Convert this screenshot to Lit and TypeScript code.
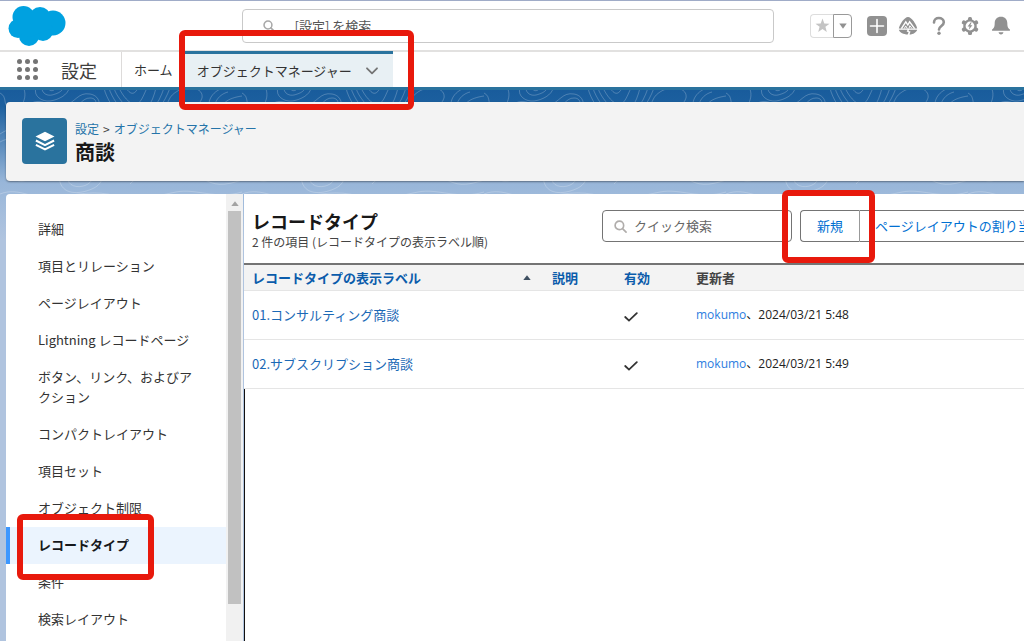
import { LitElement, html, css, svg } from "lit";
import { customElement, property } from "lit/decorators.js";
import { classMap } from "lit/directives/class-map.js";

const contour = encodeURIComponent(
  `<svg xmlns="http://www.w3.org/2000/svg" width="242" height="110" fill="none" stroke="#fff" stroke-opacity=".22">
  <path d="M0 3c8 4 2 12 10 16s18-8 14-20M36-2c-3 8 6 14 14 13s18-6 19-13M42-2c0 6 6 8 10 7s10-3 11-7M48-2c1 3 5 4 8 0"/>
  <path d="M30 14c12-8 22 6 34 2s14-14 26-12 12 16 2 22-30 4-42 12M72 20c8-4 10-12 18-12s8 9 0 14-18 3-26 8"/>
  <path d="M104-2c2 10 12 26 20 30M109-2c2 8 12 24 20 26M114-2c2 8 12 20 18 22M119-2c4 8 10 16 16 16s8-8 12-16M126-2c4 6 8 8 12 0M132 28c14-4 20-14 24-30M138 28c12-4 20-12 26-30M146 28c10-4 18-14 24-30"/>
  <path d="M176 2c12-8 28-4 26 6s-18 8-26 14-14 2-10-6 4-10 10-14zM210 20c-4-10 4-20 14-22M216 22c-4-10 4-18 12-20M224 24c-6-10 4-16 18-18"/>
  <path d="M0 44c20-14 30 4 48 0s20-16 38-12 22 22 40 16 24-22 44-18 20 24 40 20 18-14 32-6M0 52c18-10 30 4 46 2s24-16 40-12 20 20 40 16 24-20 42-16 22 22 40 20 20-10 34-10"/>
  <path d="M10 76c4-12 24-10 26 0s-10 18-20 14-8-8-6-14zM16 77c3-7 14-6 15 0s-6 10-11 8-5-4-4-8zM60 92c-4-16 14-24 30-20s16 20 4 26-30 8-34-6zM68 90c-2-8 8-14 18-12s8 12 2 16-18 4-20-4zM130 84c14-16 28-2 42-8s20-8 30 2 22 6 40 0M130 94c12-14 28-4 42-8s18-6 30 2 22 8 40 2M0 104c20-8 36 8 56 4s40-8 60-2 40 0 60-4 40 8 66 0"/>
  </svg>`
);

const icons = {
  search: svg`<svg viewBox="0 0 14 14" fill="none" stroke="currentColor" stroke-width="1.8"><circle cx="5.8" cy="5.8" r="4.6"/><path d="M9.2 9.2 13 13" stroke-linecap="round"/></svg>`,
  plus: svg`<svg viewBox="0 0 20 20"><rect width="20" height="20" rx="4" fill="currentColor"/><path d="M10 3.5v13M3.5 10h13" stroke="#fff" stroke-width="1.6" stroke-linecap="round"/></svg>`,
  trail: svg`<svg viewBox="0 0 20 20"><path d="M.8 12.500C1.800 8 6.500 1 10 1s8.200 7 9.200 11.500z" fill="currentColor"/><path d="m3.400 12.600 4.400-6.800 2 3.200 1.800-3.200 5 6.800" fill="none" stroke="#fff" stroke-width="1.400"/><path d="m6.300 12.500 1.400-2.600 1.600 2.600M11 12.500l.8-2.800 2.200 2.800" fill="none" stroke="#fff" stroke-width="1"/><path d="M.8 13.800h8.800L8.600 15.400l2 .8-.9 2.400C5.500 18.400 1.800 16.600.800 13.800zM11.200 13.800h8c-.8 2.600-3.800 4.600-7.700 4.800l1-3-2-.6z" fill="currentColor"/></svg>`,
  help: svg`<svg viewBox="0 0 20 20"><path d="M5 6.500C5 3.500 7.200 2 9.800 2c2.800 0 5 1.700 5 4.300 0 3.700-4.600 3.700-4.800 7.200" fill="none" stroke="currentColor" stroke-width="2.600" stroke-linecap="round"/><circle cx="10" cy="17.300" r="1.700" fill="currentColor"/></svg>`,
  gear: svg`<svg viewBox="0 0 20 20"><g fill="currentColor"><circle cx="10" cy="10" r="6.800"/>${[0, 60, 120].map(
    (a) => svg`<rect x="8" y="1" width="4" height="18" rx="1.500" transform="rotate(${a} 10 10)"/>`
  )}</g><circle cx="10" cy="10" r="4.400" fill="#fff"/><path d="M10.800 6.200 7.600 10.600h2l-.8 3.200 3.600-4.500h-2.100l1.400-3.100z" fill="currentColor"/></svg>`,
  bell: svg`<svg viewBox="0 0 20 20" fill="currentColor"><path d="M10 .8c-3.900 0-6.300 2.700-6.300 6.200 0 4.600-1.200 5.200-2.300 6.300-.9.900-.4 1.500.4 1.500h16.400c.8 0 1.300-.6.400-1.500-1.100-1.100-2.300-1.700-2.300-6.300C16.300 3.500 13.900.8 10 .8zM7.600 16.200h4.800c0 1.200-1 2.200-2.400 2.200s-2.400-1-2.400-2.200z"/></svg>`,
  star: svg`<svg viewBox="0 0 16 16" fill="currentColor"><path d="m8 .6 1.900 5.200 5.600.2-4.400 3.400 1.500 5.500L8 11.800l-4.600 3.100 1.500-5.500L.5 6l5.600-.2z"/></svg>`,
  caret: svg`<svg viewBox="0 0 8 6" fill="currentColor"><path d="M.3.500h7.400L4 5.700z"/></svg>`,
  up: svg`<svg viewBox="0 0 8 5" fill="currentColor"><path d="M.300 5h7.400L4 .300z"/></svg>`,
  chevron: svg`<svg viewBox="0 0 12 8" fill="none" stroke="currentColor" stroke-width="1.800" stroke-linecap="round" stroke-linejoin="round"><path d="m1 1.300 5 5 5-5"/></svg>`,
  check: svg`<svg viewBox="0 0 14 10" fill="none" stroke="currentColor" stroke-width="1.800" stroke-linecap="round"><path d="M1.200 5 5 8.600 12.800 1.200"/></svg>`,
  layers: svg`<svg viewBox="0 0 20 20"><path d="M10 .800 19.500 5.500 10 10.200.500 5.500z" fill="#fff"/><path d="m.900 9.500 9.100 4.600 9.100-4.600M.900 13.800l9.100 4.600 9.100-4.600" fill="none" stroke="#fff" stroke-width="2"/></svg>`,
  cloud: svg`<svg viewBox="0 0 58 42" fill="#00a1e0"><circle cx="15.500" cy="12" r="11"/><circle cx="32" cy="12.500" r="10.500"/><circle cx="45" cy="18" r="12.500"/><circle cx="10" cy="23.500" r="9.500"/><circle cx="21" cy="31" r="10"/><circle cx="35" cy="26" r="10"/><path d="M12 10h30v14l-20 8-12-4z"/></svg>`,
};

@customElement("setup-header")
class SetupHeader extends LitElement {
  static styles = css`
    :host { display: block; background: #fff; color: #3e3e3c; }
    .top {
      display: grid; grid-template-columns: 1fr minmax(0, 532px) 1fr; align-items: center;
      height: 52px; box-sizing: border-box; padding: 0 13px 0 4px;
      border-top: 1px solid #a0acc8; border-bottom: 2px solid #e2e1e0;
    }
    .logo { display: block; width: 58px; height: 42px; margin-left: 4px; }
    .search {
      display: flex; align-items: center; gap: 20px; height: 32px; padding: 0 20px;
      border: 1px solid #c9c9c9; border-radius: 4px; color: #a8a8a8;
    }
    .search svg { width: 12px; height: 12px; }
    input { flex: 1; min-width: 0; border: 0; outline: 0; padding: 0; background: none; font: inherit; color: #444; }
    input::placeholder { color: #555; opacity: 1; }
    .tools { display: flex; justify-content: flex-end; align-items: center; gap: 11px; color: #919191; }
    button { display: grid; place-items: center; padding: 0; border: 0; background: none; color: inherit; font: inherit; }
    .tool, .tool svg { width: 20px; height: 20px; }
    .fav { display: flex; margin-right: 4px; }
    .fav button { height: 24px; box-sizing: border-box; border: 1px solid #999; }
    .fav .star { width: 23px; border-color: #ddd; border-right: 0; border-radius: 4px 0 0 4px; color: #c4c4c4; }
    .fav .more { width: 19px; border-radius: 0 4px 4px 0; }
    .star svg { width: 15px; height: 15px; }
    .more svg { width: 8px; height: 6px; }
    .nav { display: flex; align-items: stretch; height: 35px; border-bottom: 3px solid #2a739e; }
    .waffle { display: grid; grid-template-columns: repeat(3, 5px); gap: 3px; align-content: center; margin-left: 17px; }
    .waffle i { width: 5px; height: 5px; border-radius: 3px; background: #747474; }
    .app { display: flex; align-items: center; font-size: 18px; padding: 0 24px 0 23px; border-right: 1px solid #dddbda; }
    a { display: flex; align-items: center; padding: 0 12px; color: #333; text-decoration: none; }
    .current { margin-top: -1px; padding-right: 15px; gap: 14px; background: #e8f0f4; border-top: 3px solid #2a739e; }
    .current svg { width: 12px; height: 8px; color: #747474; }
  `;
  render() {
    return html`
      <div class="top">
        <span class="logo">${icons.cloud}</span>
        <label class="search">${icons.search}<input type="search" aria-label="検索" placeholder="[設定] を検索" /></label>
        <div class="tools">
          <div class="fav">
            <button class="star" aria-label="お気に入り">${icons.star}</button>
            <button class="more" aria-label="お気に入りリスト">${icons.caret}</button>
          </div>
          <button class="tool" aria-label="追加">${icons.plus}</button>
          <button class="tool" aria-label="ガイド">${icons.trail}</button>
          <button class="tool" aria-label="ヘルプ">${icons.help}</button>
          <button class="tool" aria-label="設定">${icons.gear}</button>
          <button class="tool" aria-label="通知">${icons.bell}</button>
        </div>
      </div>
      <nav class="nav">
        <button class="waffle" aria-label="アプリケーションランチャー">${Array.from({ length: 9 }, () => html`<i></i>`)}</button>
        <span class="app">設定</span>
        <a href="#home">ホーム</a>
        <a class="current" href="#objects">オブジェクトマネージャー ${icons.chevron}</a>
      </nav>
    `;
  }
}

@customElement("object-sidebar")
class ObjectSidebar extends LitElement {
  @property({ type: Array }) items: string[] = [];
  @property() selected = "";
  static styles = css`
    :host { display: flex; background: #fff; border-radius: 4px 0 0 0; overflow: hidden; }
    .list { flex: 1; min-width: 0; margin: 0; padding: 17px 0 0; list-style: none; }
    a { display: block; padding: 8px 28px 9px; line-height: 20px; border-left: 4px solid transparent; color: #333; text-decoration: none; }
    .on { background: #ebf4fe; border-left-color: #3c97ff; color: #16181c; font-weight: 700; }
    .track { display: flex; flex-direction: column; align-items: center; width: 17px; background: #f1f1f1; color: #a3a3a3; }
    .track svg { width: 8px; height: 5px; padding: 7px 0 5px; }
    .thumb { width: 13px; height: 88%; background: #c1c1c1; }
  `;
  render() {
    return html`
      <ul class="list">
        ${this.items.map((t) => html`<li><a href="#" class=${classMap({ on: t === this.selected })}>${t}</a></li>`)}
      </ul>
      <div class="track">${icons.up}<div class="thumb"></div></div>
    `;
  }
}

@customElement("record-types")
class RecordTypes extends LitElement {
  rows = [
    { name: "01.コンサルティング商談", by: "mokumo", at: "2024/03/21 5:48" },
    { name: "02.サブスクリプション商談", by: "mokumo", at: "2024/03/21 5:49" },
  ];
  static styles = css`
    :host { display: flex; flex-direction: column; min-width: 0; overflow: hidden; background: #fff; }
    .bar { display: flex; align-items: flex-start; height: 53px; padding: 16px 0 0 8px; border-bottom: 2px solid #747474; }
    .title { flex: 0 0 350px; }
    h2 { margin: 0; font-size: 18px; line-height: 22px; color: #181818; }
    p { margin: 0; font-size: 12px; line-height: 20px; color: #444; }
    .quick {
      flex: none; display: flex; align-items: center; gap: 7px; box-sizing: border-box; width: 190px; height: 32px;
      padding: 0 11px; margin-right: 8px; border: 1px solid #747474; border-radius: 4px; color: #b0adab;
    }
    .quick svg { flex: none; width: 13px; height: 13px; }
    input { flex: 1; min-width: 0; border: 0; outline: 0; padding: 0; background: none; font: inherit; color: #444; }
    input::placeholder { color: #666; opacity: 1; }
    .group { flex: none; display: flex; }
    button {
      height: 32px; padding: 0 16px; border: 1px solid #747474; background: #fff; color: #0070d2;
      font: inherit; white-space: nowrap;
    }
    button:first-child { border-radius: 4px 0 0 4px; border-right-color: #999; }
    button:last-child { border-left: 0; padding-left: 15px; border-radius: 0 4px 4px 0; }
    table { width: 100%; table-layout: fixed; border-collapse: separate; border-spacing: 0; }
    .c1 { width: 300px; }
    .c2 { width: 72px; }
    th, td { box-sizing: border-box; text-align: left; padding: 0 8px; border-bottom: 1px solid #e5e5e5; white-space: nowrap; }
    th { height: 26px; line-height: 24px; background: #f3f3f3; color: #444; }
    th a { color: #0b5cab; }
    td { height: 49px; color: #222; }
    a { color: #1b69b6; text-decoration: none; }
    .stamp { font-family: "Open Sans", "Noto Sans CJK JP", sans-serif; font-size: 12px; }
    .by { color: #2b7de0; }
    .sort { display: flex; align-items: center; justify-content: space-between; padding-right: 5px; }
    .sort svg { width: 8px; height: 5px; color: #3e4f60; }
    td svg { display: block; width: 14px; height: 10px; color: #333; padding-top: 3px; }
    .rest { flex: 1; border-left: 1px solid #111; }
  `;
  render() {
    return html`
      <div class="bar">
        <div class="title">
          <h2>レコードタイプ</h2>
          <p>2 件の項目 (レコードタイプの表示ラベル順)</p>
        </div>
        <label class="quick">${icons.search}<input type="search" aria-label="クイック検索" placeholder="クイック検索" /></label>
        <div class="group"><button>新規</button><button>ページレイアウトの割り当て</button></div>
      </div>
      <table>
        <colgroup><col class="c1" /><col class="c2" /><col class="c2" /><col /></colgroup>
        <thead>
          <tr>
            <th><span class="sort"><a href="#">レコードタイプの表示ラベル</a>${icons.up}</span></th>
            <th><a href="#">説明</a></th>
            <th><a href="#">有効</a></th>
            <th>更新者</th>
          </tr>
        </thead>
        <tbody>
          ${this.rows.map(
            (r) => html`<tr>
              <td><a href="#">${r.name}</a></td>
              <td></td>
              <td>${icons.check}</td>
              <td class="stamp"><a class="by" href="#">${r.by}</a>、${r.at}</td>
            </tr>`
          )}
        </tbody>
      </table>
      <div class="rest"></div>
    `;
  }
}

@customElement("app-root")
class AppRoot extends LitElement {
  items = [
    "詳細", "項目とリレーション", "ページレイアウト", "Lightning レコードページ", "ボタン、リンク、およびアクション",
    "コンパクトレイアウト", "項目セット", "オブジェクト制限", "レコードタイプ", "条件", "検索レイアウト",
  ];
  static styles = css`
    :host {
      display: flex; flex-direction: column; position: relative; height: 100vh; overflow: hidden;
      font-family: "Noto Sans CJK JP", "Noto Sans", sans-serif; font-size: 13px; line-height: 20px;
    }
    .page {
      flex: 1; min-height: 0; display: flex; flex-direction: column; gap: 13px; padding: 12px 0 0 6px;
      background:
        url("data:image/svg+xml,${css([contour] as any)}") 0 0 / 242px 110px repeat-x,
        linear-gradient(#195c9c 0, #1c609f 16px, #98b6d9 92px, #b0c4df 150px, #b0c4df);
    }
    .head {
      display: flex; align-items: flex-start; gap: 8px; box-sizing: border-box; height: 79px; padding: 16px;
      background: #f3f3f3; border-radius: 4px 0 0 4px; box-shadow: 0 1px 2px #0006;
    }
    .tile { display: grid; place-items: center; width: 45px; height: 46px; border-radius: 4px; background: #2a739e; }
    .tile svg { width: 20px; height: 20px; }
    .crumbs { display: flex; gap: 4px; font-size: 12px; line-height: 21px; color: #444; }
    .crumbs a { color: #2574a9; text-decoration: none; }
    h1 { margin: 0; font-size: 20px; line-height: 25px; color: #181818; }
    .body { flex: 1; min-height: 0; display: grid; grid-template-columns: 237px minmax(0, 1fr); gap: 1px; }
    object-sidebar, record-types { min-height: 0; }
    .mark { position: absolute; box-sizing: border-box; border: 6px solid #e8190c; border-radius: 6px; pointer-events: none; }
    .m1 { left: 179px; top: 30px; width: 235px; height: 80px; }
    .m2 { left: 782px; top: 190px; width: 93px; height: 73px; }
    .m3 { left: 17px; top: 514px; width: 137px; height: 66px; }
  `;
  render() {
    return html`
      <setup-header></setup-header>
      <main class="page">
        <header class="head">
          <span class="tile">${icons.layers}</span>
          <div>
            <div class="crumbs"><a href="#">設定</a><span>&gt;</span><a href="#">オブジェクトマネージャー</a></div>
            <h1>商談</h1>
          </div>
        </header>
        <div class="body">
          <object-sidebar .items=${this.items} selected="レコードタイプ"></object-sidebar>
          <record-types></record-types>
        </div>
      </main>
      <div class="mark m1"></div>
      <div class="mark m2"></div>
      <div class="mark m3"></div>
    `;
  }
}
